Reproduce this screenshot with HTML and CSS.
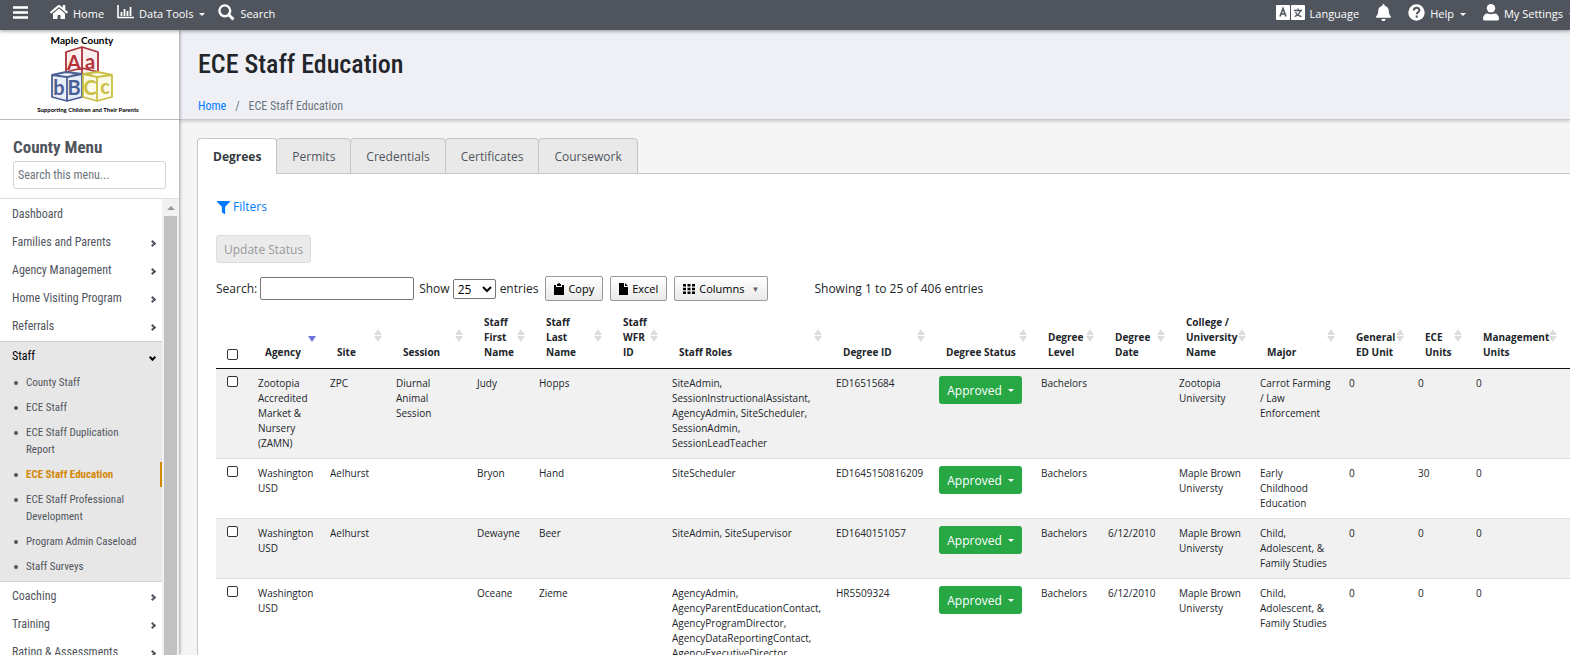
FILE: index.html
```
<!DOCTYPE html>
<html lang="en">
<head>
<meta charset="utf-8">
<meta name="viewport" content="width=device-width, initial-scale=1.0">
<title>ECE Staff Education</title>
<link rel="stylesheet" href="styles.css">
</head>
<body>
<nav class="topbar">
  <button class="nav-link burger" aria-label="Toggle menu"><svg width="15" height="13" viewBox="0 0 15 13"><path d="M0 1.5h15M0 6.5h15M0 11.5h15" stroke="#fff" stroke-width="2.4"/></svg></button>
  <a class="nav-link" href="#"><svg class="ico-home" width="18" height="16" viewBox="0 0 576 512"><path fill="#fff" d="M280 148L96 300v164a16 16 0 0 0 16 16h112a16 16 0 0 0 16-16v-96a16 16 0 0 1 16-16h64a16 16 0 0 1 16 16v96a16 16 0 0 0 16 16h112a16 16 0 0 0 16-16V300L296 148a12 12 0 0 0-16 0zM572 251l-84-69V44a12 12 0 0 0-12-12h-56a12 12 0 0 0-12 12v72l-90-74a48 48 0 0 0-61 0L4 251a12 12 0 0 0-1 17l25 31a12 12 0 0 0 17 2L280 107a12 12 0 0 1 16 0l235 194a12 12 0 0 0 17-2l25-31a12 12 0 0 0-1-17z"/></svg>Home</a>
  <a class="nav-link" href="#"><svg width="17" height="14" viewBox="0 0 17 14"><path d="M1 0v12.5h16" stroke="#fff" stroke-width="1.6" fill="none"/><path d="M4.5 7v4M7.5 4v7M10.5 6v5M13.5 2v9" stroke="#fff" stroke-width="1.8"/></svg>Data Tools<i class="caret"></i></a>
  <a class="nav-link" href="#"><svg width="17" height="17" viewBox="0 0 17 17"><circle cx="6.8" cy="6.8" r="5.4" stroke="#fff" stroke-width="2.4" fill="none"/><path d="M10.8 10.8l4.7 4.7" stroke="#fff" stroke-width="3"/></svg>Search</a>
  <span class="spacer"></span>
  <a class="nav-link right" href="#"><svg width="29" height="15" viewBox="0 0 29 15"><rect width="14" height="15" rx="1" fill="#fff"/><rect x="15" width="14" height="15" rx="1" fill="#fff"/><path d="M4 11.5L7 3.5l3 8M5 9h4" stroke="#50555d" stroke-width="1.6" fill="none"/><path d="M18 5.5h8M22 3.5v2M24.5 5.5c-1 3-3 5-6 6M19.500 7c1 2.500 3 4 6 4.500" stroke="#50555d" stroke-width="1.300" fill="none"/></svg>Language</a>
  <a class="nav-link right" href="#" aria-label="Alerts"><svg width="15" height="17" viewBox="0 0 448 512"><path fill="#fff" d="M224 512c35 0 64-29 64-64H160c0 35 29 64 64 64zM439 362c-19-20-55-51-55-154 0-78-54-140-128-155V32a32 32 0 1 0-64 0v21C118 68 64 130 64 208c0 103-36 134-55 154a32 32 0 0 0 23 54h384a32 32 0 0 0 23-54z"/></svg></a>
  <a class="nav-link right" href="#"><svg width="17" height="17" viewBox="0 0 17 17"><circle cx="8.500" cy="8.500" r="8.200" fill="#fff"/><path d="M5.800 6.500c.2-3.800 5.800-3.500 5.600-.2 0 1.900-2.700 1.900-2.700 3.900M8.700 11.500v2.200" stroke="#50555d" stroke-width="2" fill="none"/></svg>Help<i class="caret"></i></a>
  <a class="nav-link right" href="#"><svg width="16" height="17" viewBox="0 0 16 17"><circle cx="8" cy="4.300" r="4.200" fill="#fff"/><path d="M0 14.500c0-3 2-5 4.500-5 2 1 5 1 7 0 2.500 0 4.500 2 4.500 5 0 1.500-.7 2-2 2H2c-1.300 0-2-.5-2-2z" fill="#fff"/></svg>My Settings<i class="caret"></i></a>
</nav>

<div class="wrapper">
<aside class="sidebar">
  <div class="brand">
    <svg width="120" height="84" viewBox="0 0 120 84" role="img" aria-label="Maple County">
      <text x="54" y="11" class="logo-name" text-anchor="middle">Maple County</text>
      <g stroke-width="1.800" stroke-linejoin="round" fill="#fff">
        <path stroke="#a8323a" fill="#fbeeee" d="M38 19L54 14 70 19V39L54 43 38 39zM54 14V43M38 39L54 35 70 39"/>
        <path stroke="#4a5f94" fill="#e9edf6" d="M24 42L39 44 54 41V64L39 68 24 64zM39 44V68M24 42L38 39 54 41"/>
        <path stroke="#c9c043" fill="#fbfae6" d="M55 41L69 44 84 42V64L69 68 55 64zM69 44V68M55 41L70 39 84 42"/>
      </g>
      <g class="letters" text-anchor="middle">
        <text x="46" y="37" fill="#b5313a">A</text><text x="62" y="36" fill="#b5313a">a</text>
        <text x="31" y="62" fill="#4a5f94">b</text><text x="46" y="62" fill="#4a5f94">B</text>
        <text x="62" y="62" fill="#c9c043">C</text><text x="77" y="61" fill="#c9c043">c</text>
      </g>
      <text x="60" y="79" class="logo-tag" text-anchor="middle">Supporting Children and Their Parents</text>
    </svg>
  </div>
  <div class="menu-head">
    <h2>County Menu</h2>
    <input type="text" placeholder="Search this menu..." aria-label="Search this menu">
  </div>
  <div class="menu-body">
    <ul class="menu">
      <li><a href="#">Dashboard</a></li>
      <li><a href="#" class="more">Families and Parents</a></li>
      <li><a href="#" class="more">Agency Management</a></li>
      <li><a href="#" class="more">Home Visiting Program</a></li>
      <li><a href="#" class="more">Referrals</a></li>
      <li class="open"><a href="#" class="more">Staff</a>
        <ul class="submenu">
          <li><a href="#">County Staff</a></li>
          <li><a href="#">ECE Staff</a></li>
          <li><a href="#">ECE Staff Duplication Report</a></li>
          <li class="current"><a href="#">ECE Staff Education</a></li>
          <li><a href="#">ECE Staff Professional Development</a></li>
          <li><a href="#">Program Admin Caseload</a></li>
          <li><a href="#">Staff Surveys</a></li>
        </ul>
      </li>
      <li><a href="#" class="more">Coaching</a></li>
      <li><a href="#" class="more">Training</a></li>
      <li><a href="#" class="more">Rating &amp; Assessments</a></li>
    </ul>
    <div class="scroll"><i class="up"></i><div class="thumb"></div></div>
  </div>
</aside>

<main class="content">
  <header class="page-head">
    <h1>ECE Staff Education</h1>
    <div class="breadcrumb"><a href="#">Home</a><span>/</span><span>ECE Staff Education</span></div>
  </header>

  <div class="tabs">
    <a href="#" class="tab active">Degrees</a>
    <a href="#" class="tab">Permits</a>
    <a href="#" class="tab">Credentials</a>
    <a href="#" class="tab">Certificates</a>
    <a href="#" class="tab">Coursework</a>
  </div>
  <div class="panel">
    <a href="#" class="filters"><svg width="13" height="13" viewBox="0 0 512 512"><path fill="#007bff" d="M488 0H24C3 0-8 26 7 41l185 185v206c0 8 4 15 10 20l80 56c16 11 38 0 38-20V226L505 41c15-15 4-41-17-41z"/></svg>Filters</a>
    <button class="update" disabled>Update Status</button>

    <div class="tools">
      <label for="q">Search:</label><input id="q" type="text" class="q">
      <label for="len">Show</label><select id="len"><option>25</option></select><span class="entries">entries</span>
      <button class="dt"><svg width="10" height="12" viewBox="0 0 10 12"><path d="M0 2h2v2h6V2h2v10H0zM3 1h1a1 1 0 0 1 2 0h1v2H3z"/></svg>Copy</button>
      <button class="dt"><svg width="9" height="12" viewBox="0 0 9 12"><path d="M0 0h5v4h4v8H0zM6 0l3 3H6z"/></svg>Excel</button>
      <button class="dt cols"><svg width="12" height="10" viewBox="0 0 12 10"><path d="M0 0h3v2.500H0zM4.500 0h3v2.500h-3zM9 0h3v2.500H9zM0 3.700h3v2.500H0zM4.500 3.700h3v2.500h-3zM9 3.700h3v2.500H9zM0 7.500h3V10H0zM4.500 7.500h3V10h-3zM9 7.500h3V10H9z"/></svg>Columns<span class="arrow">▼</span></button>
      <span class="info">Showing 1 to 25 of 406 entries</span>
    </div>

    <table>
      <colgroup><col class="w-check"><col class="w-agency"><col class="w-site"><col class="w-session"><col class="w-first"><col class="w-last"><col class="w-wfr"><col class="w-roles"><col class="w-id"><col class="w-status"><col class="w-level"><col class="w-date"><col class="w-college"><col class="w-major"><col class="w-general"><col class="w-ece"><col class="w-mgmt"><col></colgroup>
      <thead>
        <tr>
          <th class="check"><input type="checkbox" aria-label="Select all"></th>
          <th class="sort desc">Agency</th>
          <th class="sort">Site</th>
          <th class="sort">Session</th>
          <th class="sort">Staff<br>First<br>Name</th>
          <th class="sort">Staff<br>Last<br>Name</th>
          <th class="sort">Staff<br>WFR<br>ID</th>
          <th class="sort">Staff Roles</th>
          <th class="sort">Degree ID</th>
          <th class="sort">Degree Status</th>
          <th class="sort">Degree<br>Level</th>
          <th class="sort">Degree<br>Date</th>
          <th class="sort">College /<br>University<br>Name</th>
          <th class="sort">Major</th>
          <th class="sort">General<br>ED Unit</th>
          <th class="sort">ECE<br>Units</th>
          <th class="sort">Management<br>Units</th>
          <th></th>
        </tr>
      </thead>
      <tbody>
        <tr>
          <td class="check"><input type="checkbox" aria-label="Select Judy Hopps"></td>
          <td>Zootopia<br>Accredited<br>Market &amp;<br>Nursery<br>(ZAMN)</td><td>ZPC</td><td>Diurnal<br>Animal<br>Session</td><td>Judy</td><td>Hopps</td><td></td>
          <td>SiteAdmin,<br>SessionInstructionalAssistant,<br>AgencyAdmin, SiteScheduler,<br>SessionAdmin,<br>SessionLeadTeacher</td>
          <td>ED16515684</td><td><button class="status">Approved<i class="caret"></i></button></td><td>Bachelors</td><td></td>
          <td>Zootopia<br>University</td><td>Carrot Farming<br>/ Law<br>Enforcement</td><td>0</td><td>0</td><td>0</td><td></td>
        </tr>
        <tr>
          <td class="check"><input type="checkbox" aria-label="Select Bryon Hand"></td>
          <td>Washington<br>USD</td><td>Aelhurst</td><td></td><td>Bryon</td><td>Hand</td><td></td>
          <td>SiteScheduler</td>
          <td>ED1645150816209</td><td><button class="status">Approved<i class="caret"></i></button></td><td>Bachelors</td><td></td>
          <td>Maple Brown<br>Universty</td><td>Early<br>Childhood<br>Education</td><td>0</td><td>30</td><td>0</td><td></td>
        </tr>
        <tr>
          <td class="check"><input type="checkbox" aria-label="Select Dewayne Beer"></td>
          <td>Washington<br>USD</td><td>Aelhurst</td><td></td><td>Dewayne</td><td>Beer</td><td></td>
          <td>SiteAdmin, SiteSupervisor</td>
          <td>ED1640151057</td><td><button class="status">Approved<i class="caret"></i></button></td><td>Bachelors</td><td>6/12/2010</td>
          <td>Maple Brown<br>Universty</td><td>Child,<br>Adolescent, &amp;<br>Family Studies</td><td>0</td><td>0</td><td>0</td><td></td>
        </tr>
        <tr>
          <td class="check"><input type="checkbox" aria-label="Select Oceane Zieme"></td>
          <td>Washington<br>USD</td><td></td><td></td><td>Oceane</td><td>Zieme</td><td></td>
          <td>AgencyAdmin,<br>AgencyParentEducationContact,<br>AgencyProgramDirector,<br>AgencyDataReportingContact,<br>AgencyExecutiveDirector</td>
          <td>HR5509324</td><td><button class="status">Approved<i class="caret"></i></button></td><td>Bachelors</td><td>6/12/2010</td>
          <td>Maple Brown<br>Universty</td><td>Child,<br>Adolescent, &amp;<br>Family Studies</td><td>0</td><td>0</td><td>0</td><td></td>
        </tr>
      </tbody>
    </table>
  </div>
</main>
</div>
</body>
</html>
```
FILE: styles.css
```
* { box-sizing: border-box; }
body {
  margin: 0;
  height: 100vh;
  overflow: hidden;
  display: flex;
  flex-direction: column;
  background: #f5f5f5;
  color: #212529;
  font: 13px/20px "Open Sans", "Noto Sans", sans-serif;
}
a { color: #007bff; text-decoration: none; }
button, input, select { font-family: inherit; }

/* top bar */
.topbar {
  display: flex;
  align-items: center;
  flex: none;
  height: 30px;
  padding: 0 0 3px 13px;
  background: #50555d;
  box-shadow: 0 1px 4px rgba(0,0,0,.4);
  z-index: 3;
}
.nav-link {
  display: flex;
  align-items: center;
  gap: 5px;
  margin-right: 13px;
  padding: 0;
  border: 0;
  background: none;
  color: #fff;
  font-size: 11px;
  line-height: 14px;
  white-space: nowrap;
}
.nav-link svg { margin-bottom: 3px; }
.right { margin-right: 17px; }
.nav-link:last-child { margin-right: -5px; }
.burger { margin-right: 22px; }
.spacer { flex: 1; }
.caret {
  border: 3px solid transparent;
  border-top-color: #fff;
  border-bottom: 0;
  margin: 1px 0 0 1px;
}

.wrapper { display: flex; flex: 1; min-height: 0; }

/* sidebar */
.sidebar {
  display: flex;
  flex-direction: column;
  flex: none;
  width: 179px;
  background: #fff;
  box-shadow: 1px 0 3px rgba(0,0,0,.35);
  z-index: 2;
  font-family: "Roboto Condensed", Roboto, sans-serif;
}
.brand { height: 90px; padding: 3px 0 0 28px; border-bottom: 1px solid #bbb; }
.logo-name { font: bold 10px Lato, sans-serif; fill: #000; }
.logo-tag { font: bold 6px Lato, sans-serif; fill: #000; }
.letters { font: bold 20px Lato, sans-serif; }
.menu-head { height: 79px; padding: 17px 13px 0; border-bottom: 1px solid #ddd; }
.menu-head h2 { margin: 0 0 4px; font-size: 17px; line-height: 20px; color: #50555d; }
.menu-head input {
  width: 100%;
  height: 28px;
  padding: 0 4px;
  border: 1px solid #ced4da;
  border-radius: 3px;
  font-size: 12px;
}
.menu-head input::placeholder { color: #6c757d; }
.menu-body { display: flex; flex: 1; min-height: 0; overflow: hidden; }
.menu, .submenu { list-style: none; margin: 0; padding: 0; }
.menu { flex: 1; padding-top: 1px; }
.menu a { display: block; color: #50555d; }
.menu > li > a {
  display: flex;
  align-items: center;
  justify-content: space-between;
  height: 28px;
  padding: 0 6px 0 12px;
  font-size: 12px;
}
.more::after {
  content: "";
  width: 3px;
  height: 3px;
  margin: 2px 1px 0 0;
  border: solid #50555d;
  border-width: 2px 2px 0 0;
  transform: rotate(45deg);
}
.menu > .open { margin-top: 1px; background: #e7e7e7; border: solid #d0d0d0; border-width: 1px 0; }
.open > a.more { color: #000; }
.open > .more::after { transform: rotate(135deg); border-color: #000; }
.submenu { padding-bottom: 2px; }
.submenu li { padding: 4px 25px 4px 26px; font-size: 11px; line-height: 17px; position: relative; }
.submenu li::before {
  content: "";
  position: absolute;
  left: 14px;
  top: 11px;
  width: 4px;
  height: 4px;
  border-radius: 2px;
  background: #50555d;
}
.submenu .current { border-right: 2px solid #d48806; }
.submenu .current a { color: #d48806; font-weight: bold; }
.scroll { width: 17px; background: #f1f1f1; padding: 0 2px; display: flex; flex-direction: column; align-items: center; }
.up { height: 17px; flex: none; }
.up::before { content: ""; display: block; margin-top: 7px; border: 4px solid transparent; border-top: 0; border-bottom-color: #999; }
.thumb { flex: 1; width: 13px; background: #c1c1c1; }

/* page */
.content { flex: 1; min-width: 0; overflow: hidden; }
.page-head {
  height: 90px;
  padding: 16px 19px 0;
  background: #eff0f5;
  border-bottom: 1px solid #c8c8cc;
  box-shadow: 0 1px 4px rgba(0,0,0,.2);
  font-family: "Roboto Condensed", Roboto, sans-serif;
}
h1 { margin: 0 0 15px; font-size: 26px; line-height: 36px; font-weight: 500; }
.breadcrumb { display: flex; gap: 9px; font-size: 12px; line-height: 18px; color: #6c757d; }

.tabs { display: flex; margin: 18px 0 0 18px; position: relative; }
.tab {
  height: 36px;
  padding: 0 15px;
  line-height: 35px;
  border: 1px solid #c5c5c5;
  border-radius: 4px 4px 0 0;
  background: #e9e9e9;
  color: #50555d;
  font-size: 12px;
}
.tab + .tab { margin-left: -1px; }
.tab.active { background: #fff; border-bottom-color: #fff; color: #343a40; font-weight: bold; }
.panel {
  margin: -1px 0 0 18px;
  padding: 23px 0 0 18px;
  background: #fff;
  border: solid #c5c5c5;
  border-width: 1px 0 0 1px;
}
.filters { display: flex; align-items: center; gap: 3px; width: max-content; margin-left: 1px; font-size: 12px; }
.update {
  display: block;
  margin-top: 18px;
  height: 28px;
  padding: 0 7px;
  border: 1px solid #ddd;
  border-radius: 3px;
  background: #ebebeb;
  color: #999;
  font-size: 12px;
}
.tools { display: flex; align-items: center; margin-top: 13px; font-size: 12px; }
.q { width: 154px; height: 23px; margin: 0 5px 0 3px; border: 1px solid #777; border-radius: 2px; }
.tools select { width: 43px; height: 20px; margin: 0 4px 0 3px; padding: 0; border: 1px solid #777; border-radius: 2px; background: #fff; font-size: 12px; }
.entries { margin-right: 7px; }
.dt {
  display: flex;
  align-items: center;
  gap: 4px;
  height: 25px;
  margin-right: 7px;
  padding: 0 8px;
  border: 1px solid #999;
  border-radius: 2px;
  background: linear-gradient(#fff, #e9e9e9);
  color: #000;
  font-size: 11px;
}
.arrow { margin-left: 3px; font-size: 8px; color: #666; }
.info { margin-left: 39px; }

/* data table */
table {
  width: 100%;
  margin-top: 4px;
  table-layout: fixed;
  border-collapse: separate;
  border-spacing: 0;
  font-size: 10px;
  line-height: 15px;
}
.w-check { width: 32px; }
.w-agency { width: 72px; }
.w-site { width: 66px; }
.w-session { width: 81px; }
.w-first { width: 62px; }
.w-last { width: 77px; }
.w-wfr { width: 56px; }
.w-roles { width: 164px; }
.w-id { width: 103px; }
.w-status { width: 102px; }
.w-level { width: 67px; }
.w-date { width: 71px; }
.w-college { width: 81px; }
.w-major { width: 89px; }
.w-general { width: 69px; }
.w-ece { width: 58px; }
.w-mgmt { width: 95px; }
th {
  position: relative;
  padding: 10px 0 8px 17px;
  border-bottom: 1px solid #111;
  text-align: left;
  vertical-align: bottom;
  white-space: nowrap;
}
td {
  padding: 7px 0 7px 10px;
  border-bottom: 1px solid #ddd;
  vertical-align: top;
  white-space: nowrap;
}
tbody tr:nth-child(odd) { background: #f1f1f1; }
.check { padding-left: 0; text-align: center; }
.check input {
  display: block;
  width: 11px;
  height: 11px;
  margin: 0 auto;
  appearance: none;
  border: 1px solid #333;
  border-radius: 2px;
  background: #fff;
}
.sort::before, .sort::after {
  content: "";
  position: absolute;
  right: 4px;
  border: 4px solid transparent;
}
.sort::before { top: 24px; border-top: 0; border-bottom: 6px solid #dcdcdc; }
.sort::after { top: 31px; border-bottom: 0; border-top: 6px solid #dcdcdc; }
.desc::before { display: none; }
.desc::after { border-top-color: #7376dd; }
.status {
  display: flex;
  align-items: center;
  justify-content: center;
  gap: 5px;
  width: 83px;
  height: 28px;
  padding: 0;
  border: 0;
  border-radius: 3px;
  background: #28a745;
  color: #fff;
  font-size: 12px;
}
```
